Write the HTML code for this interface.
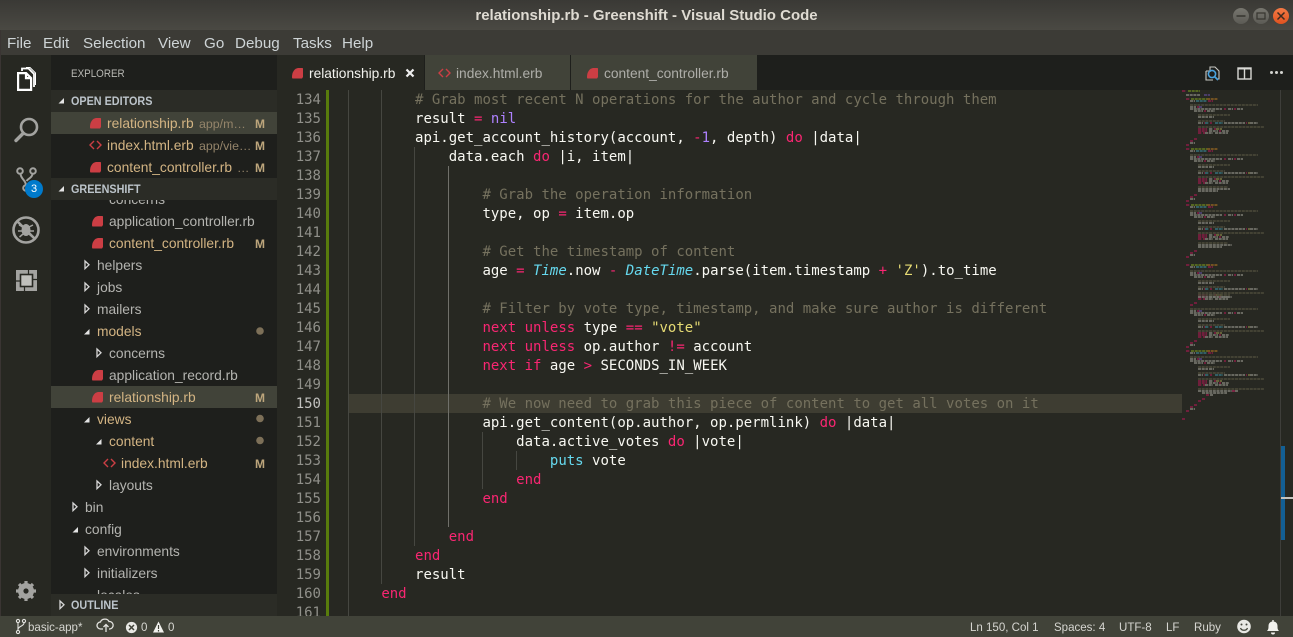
<!DOCTYPE html>
<html><head><meta charset="utf-8"><title>relationship.rb - Greenshift - Visual Studio Code</title>
<style>
html,body{margin:0;padding:0;width:1293px;height:637px;overflow:hidden;background:#272822}
div,span{position:absolute}
#root{left:0;top:0;width:1293px;height:637px;overflow:hidden;font-family:"Liberation Sans",sans-serif;font-size:13.8px}
.b{display:block}
.m{top:34px;font-size:15.2px;line-height:20px;color:#ced4d6;white-space:pre}
.t{white-space:pre;line-height:22px;height:22px;color:#b4b4b0;margin-top:1px}
.g{color:#d3b483}
.d{color:#94846a;font-size:12.4px}
.M{font-weight:bold;font-size:12px;color:#bda67c}
.h{font-weight:bold;font-size:12px;color:#bcc4ca;line-height:22px;white-space:pre;transform:scaleX(.9);transform-origin:0 0}
.tab{top:55px;height:35px;background:#414339}
.tt{top:63px;line-height:22px;white-space:pre;font-size:13.75px}
.s{top:617px;height:21px;line-height:21px;font-size:12.4px;color:#d6d6d1;white-space:pre;transform:scaleX(.93);transform-origin:0 0}
.n{left:277px;width:44px;text-align:right;color:#90908a;height:19px;line-height:19px;margin-top:1px}
.l{left:347.6px;height:19px;line-height:19px;white-space:pre;color:#f8f8f2;margin-top:1px}
#code{left:277px;top:90px;width:1016px;height:526px;overflow:hidden;font-family:"DejaVu Sans Mono","Liberation Mono",monospace;font-size:14px}
#code .n{left:0}
#code .l{left:70.6px}
b{position:static;font-weight:normal}
.k{color:#f92672}.c{color:#75715e}.p{color:#ae81ff}.y{color:#e6db74}.q{color:#66d9ef}.q2{color:#66d9ef;font-style:italic}
.gd{width:1px;background:#464741}
</style></head><body>
<div id="root">
<!-- title -->
<div style="left:0;top:0;width:1293px;height:30px;background:linear-gradient(#3a3935,#4a4943)"></div>
<div style="left:0;top:6px;width:1293px;text-align:center;font-weight:bold;font-size:15px;line-height:20px;color:#dfdbd2">relationship.rb - Greenshift - Visual Studio Code</div>
<svg class="b" style="position:absolute;left:1230px;top:5px" width="63" height="24" viewBox="0 0 63 24">
<defs><linearGradient id="gb" x1="0" y1="0" x2="0" y2="1"><stop offset="0" stop-color="#77766f"/><stop offset="1" stop-color="#5c5b55"/></linearGradient>
<linearGradient id="go" x1="0" y1="0" x2="0" y2="1"><stop offset="0" stop-color="#f47a45"/><stop offset="1" stop-color="#e0521f"/></linearGradient></defs>
<circle cx="11" cy="11" r="8" fill="url(#gb)"/><path d="M6.500 11h9" stroke="#36352f" stroke-width="1.500"/>
<circle cx="31" cy="11" r="8" fill="url(#gb)"/><rect x="27" y="8" width="8" height="6" fill="none" stroke="#36352f" stroke-width="1.200"/>
<circle cx="51" cy="11" r="8" fill="url(#go)"/><path d="M47.500 7.500l7 7M54.500 7.500l-7 7" stroke="#3c2a20" stroke-width="1.500"/>
</svg>
<!-- menu -->
<div style="left:0;top:30px;width:1293px;height:25px;background:#3c3b36"></div>
<span class="m" style="left:7px">File</span><span class="m" style="left:43px">Edit</span><span class="m" style="left:83px">Selection</span><span class="m" style="left:158px">View</span><span class="m" style="left:204px">Go</span><span class="m" style="left:235px">Debug</span><span class="m" style="left:293px">Tasks</span><span class="m" style="left:342px">Help</span>
<!-- activity -->
<div style="left:0;top:55px;width:51px;height:561px;background:#272822"></div>
<div style="left:0;top:30px;width:1px;height:607px;background:#3a3533"></div>
<svg class="b" style="position:absolute;left:0;top:55px" width="51" height="561" viewBox="0 55 51 561" fill="none">
<path d="M18.100 73.100h8l5 5v11.800H18.100zM26 73.100v5h5" stroke="#fff" stroke-width="2.200"/>
<path d="M22 71v-2.500h6.500l5.500 5.500v13" stroke="#fff" stroke-width="1.800"/>
<path d="M26 67.500h4l5.500 5.500v12" stroke="#fff" stroke-width="1"/>
<circle cx="29" cy="127" r="8" stroke="#a3a3a0" stroke-width="2.600"/><path d="M23 133.500l-7 7" stroke="#a3a3a0" stroke-width="3.400" stroke-linecap="round"/>
<circle cx="20" cy="171" r="2.800" stroke="#a3a3a0" stroke-width="2"/><circle cx="33" cy="171" r="2.800" stroke="#a3a3a0" stroke-width="2"/><circle cx="26" cy="188" r="2.800" stroke="#a3a3a0" stroke-width="2"/>
<path d="M20.500 174c.5 5 5 6 5.500 11M32.500 174c-.5 4-4 4-6 7" stroke="#a3a3a0" stroke-width="2"/>
<circle cx="34" cy="189" r="9" fill="#007acc"/>
<circle cx="26" cy="230" r="12.500" stroke="#a3a3a0" stroke-width="2.600"/><path d="M17 221l18 18" stroke="#a3a3a0" stroke-width="2.600"/>
<ellipse cx="26" cy="230" rx="4.500" ry="6" fill="#a3a3a0"/><path d="M19 225l4 2M33 225l-4 2M18 231h4M34 231h-4M19.500 237l3.500-3M32.500 237l-3.500-3" stroke="#a3a3a0" stroke-width="1.500"/>
<rect x="16" y="270" width="21" height="21" fill="#a3a3a0"/><rect x="20.500" y="274.500" width="12" height="12" fill="#c0c0bc" stroke="#272822" stroke-width="1.600"/><path d="M28.500 270v4M32.500 279.500h4.500M16 281h4M24.500 286.500V291" stroke="#272822" stroke-width="1.200"/>
<circle cx="26" cy="591" r="6" stroke="#a3a3a0" stroke-width="4"/><path d="M26 581v20M16 591h20M19 584l14 14M33 584l-14 14" stroke="#a3a3a0" stroke-width="3.200"/><circle cx="26" cy="591" r="2.600" fill="#272822"/>
</svg>
<span style="left:25px;top:180px;width:18px;text-align:center;line-height:18px;font-size:11px;color:#fff">3</span>
<!-- sidebar -->
<div style="left:51px;top:55px;width:226px;height:561px;background:#1e1f1c"></div>
<span style="left:71px;top:63px;line-height:22px;font-size:11.2px;color:#b9b9b4;transform:scaleX(.88);transform-origin:0 0">EXPLORER</span>
<div style="left:51px;top:90px;width:226px;height:22px;background:#2b2c26"></div>
<span class="h" style="left:71px;top:90px">OPEN EDITORS</span>
<div style="left:51px;top:112px;width:226px;height:22px;background:#414339"></div>
<span class="t g" style="left:107px;top:112px">relationship.rb</span><span class="t d" style="left:199px;top:112px">app/m…</span><span class="t M" style="left:255px;top:112px">M</span>
<span class="t g" style="left:107px;top:134px">index.html.erb</span><span class="t d" style="left:199px;top:134px">app/vie…</span><span class="t M" style="left:255px;top:134px">M</span>
<span class="t g" style="left:107px;top:156px">content_controller.rb</span><span class="t d" style="left:237px;top:156px">…</span><span class="t M" style="left:255px;top:156px">M</span>
<!-- tree -->
<div style="left:51px;top:200px;width:226px;height:394px;overflow:hidden">
<div style="left:0;top:186px;width:226px;height:22px;background:#414339"></div>
<span class="t" style="left:58px;top:-12px">concerns</span>
<span class="t" style="left:58px;top:10px">application_controller.rb</span>
<span class="t g" style="left:58px;top:32px">content_controller.rb</span><span class="t M" style="left:204px;top:32px">M</span>
<span class="t" style="left:46px;top:54px">helpers</span>
<span class="t" style="left:46px;top:76px">jobs</span>
<span class="t" style="left:46px;top:98px">mailers</span>
<span class="t g" style="left:46px;top:120px">models</span>
<span class="t" style="left:58px;top:142px">concerns</span>
<span class="t" style="left:58px;top:164px">application_record.rb</span>
<span class="t g" style="left:58px;top:186px">relationship.rb</span><span class="t M" style="left:204px;top:186px">M</span>
<span class="t g" style="left:46px;top:208px">views</span>
<span class="t g" style="left:58px;top:230px">content</span>
<span class="t g" style="left:70px;top:252px">index.html.erb</span><span class="t M" style="left:204px;top:252px">M</span>
<span class="t" style="left:58px;top:274px">layouts</span>
<span class="t" style="left:34px;top:296px">bin</span>
<span class="t" style="left:34px;top:318px">config</span>
<span class="t" style="left:46px;top:340px">environments</span>
<span class="t" style="left:46px;top:362px">initializers</span>
<span class="t" style="left:46px;top:384px">locales</span>
</div>
<div style="left:51px;top:178px;width:226px;height:22px;background:#2b2c26"></div>
<span class="h" style="left:71px;top:178px">GREENSHIFT</span>
<div style="left:51px;top:594px;width:226px;height:22px;background:#2b2c26"></div>
<span class="h" style="left:71px;top:594px">OUTLINE</span>
<svg class="b" style="position:absolute;left:51px;top:90px" width="226" height="526" viewBox="51 90 226 526">
<defs>
<path id="rb" d="M6 0H10.500Q11 0 11 1V9L10 10.500H.500Q0 10.500 0 9C0 4 2.500 .5 6 0Z" fill="#cc3e44"/>
<path id="ht" d="M4 0L0 4L4 8M7 0L11 4L7 8" fill="none" stroke="#cc3e44" stroke-width="1.400"/>
<path id="ar" d="M0 0L4 3.800L0 7.600Z" fill="none" stroke="#d6d6d6" stroke-width="1.300"/>
<path id="dn" d="M5.500 0V5.500H0Z" fill="#e4e4e4"/>
</defs>
<use href="#dn" x="58.500" y="98"/><use href="#dn" x="58.500" y="186"/>
<use href="#ar" x="60" y="601"/>
<use href="#rb" x="90" y="118"/><use href="#ht" x="90" y="141"/><use href="#rb" x="90" y="162"/>
<use href="#rb" x="92" y="216"/><use href="#rb" x="92" y="238"/>
<use href="#ar" x="85" y="261"/><use href="#ar" x="85" y="283"/><use href="#ar" x="85" y="305"/>
<use href="#dn" x="84" y="329"/><use href="#ar" x="97" y="349"/>
<use href="#rb" x="92" y="370"/><use href="#rb" x="92" y="392"/>
<use href="#dn" x="84" y="417"/><use href="#dn" x="96" y="439"/>
<use href="#ht" x="104" y="459"/><use href="#ar" x="97" y="481"/>
<use href="#ar" x="73" y="503"/><use href="#dn" x="72.500" y="527"/>
<use href="#ar" x="85" y="547"/><use href="#ar" x="85" y="569"/>
<circle cx="260" cy="331" r="3.800" fill="#7d7058"/><circle cx="260" cy="418.500" r="3.800" fill="#7d7058"/><circle cx="260" cy="440.500" r="3.800" fill="#7d7058"/>
</svg>
<!-- tabs -->
<div style="left:277px;top:55px;width:1016px;height:35px;background:#1e1f1c"></div>
<div class="tab" style="left:277px;width:147px;background:#272822"></div>
<div class="tab" style="left:425px;width:145px"></div>
<div class="tab" style="left:571px;width:186px"></div>
<span class="tt" style="left:309px;color:#f2f2ee">relationship.rb</span>
<span class="tt" style="left:456px;color:#aeaea9">index.html.erb</span>
<span class="tt" style="left:604px;color:#aeaea9">content_controller.rb</span>
<svg class="b" style="position:absolute;left:277px;top:55px" width="1016" height="35" viewBox="277 55 1016 35" fill="none">
<use href="#rb" x="292" y="68"/><use href="#ht" x="439" y="69"/><use href="#rb" x="587" y="68"/>
<path d="M406.500 69.500l7 7M413.500 69.500l-7 7" stroke="#eee" stroke-width="2.200"/>
<path d="M1210 72v-5h5l4 4v8h-2M1206 71h4.500M1206 71v9h7" stroke="#c8c8c4" stroke-width="1.100"/>
<circle cx="1212" cy="74" r="3.600" stroke="#4aa3df" stroke-width="1.600"/><path d="M1214.500 76.500l3.500 3.500" stroke="#4aa3df" stroke-width="1.800"/>
<rect x="1238" y="68" width="13" height="11" stroke="#d8d8d4" stroke-width="1.400"/><path d="M1238 68.500h13" stroke="#d8d8d4" stroke-width="2"/><path d="M1244.500 68v11" stroke="#d8d8d4" stroke-width="1.400"/>
<circle cx="1271.500" cy="72.500" r="1.500" fill="#d4d4d0"/><circle cx="1276.500" cy="72.500" r="1.500" fill="#d4d4d0"/><circle cx="1281.500" cy="72.500" r="1.500" fill="#d4d4d0"/>
</svg>
<!-- editor -->
<div id="code">
<div style="left:71px;top:304px;width:834px;height:19px;background:#3e3d32"></div>
<div class="gd" style="left:71px;top:0;height:526px"></div>
<div class="gd" style="left:104px;top:0;height:494px"></div>
<div class="gd" style="left:137px;top:57px;height:399px"></div>
<div class="gd" style="left:171px;top:76px;height:361px;background:#70706a"></div>
<div class="gd" style="left:205px;top:342px;height:57px"></div>
<div class="gd" style="left:239px;top:361px;height:19px"></div>
<div style="left:49px;top:0;width:3px;height:526px;background:#587c0c"></div>
<div class="n" style="top:0">134</div><div class="l" style="top:0">        <b class="c"># Grab most recent N operations for the author and cycle through them</b></div>
<div class="n" style="top:19px">135</div><div class="l" style="top:19px">        result <b class="k">=</b> <b class="p">nil</b></div>
<div class="n" style="top:38px">136</div><div class="l" style="top:38px">        api.get_account_history(account, <b class="k">-</b><b class="p">1</b>, depth) <b class="k">do</b> |data|</div>
<div class="n" style="top:57px">137</div><div class="l" style="top:57px">            data.each <b class="k">do</b> |i, item|</div>
<div class="n" style="top:76px">138</div>
<div class="n" style="top:95px">139</div><div class="l" style="top:95px">                <b class="c"># Grab the operation information</b></div>
<div class="n" style="top:114px">140</div><div class="l" style="top:114px">                type, op <b class="k">=</b> item.op</div>
<div class="n" style="top:133px">141</div>
<div class="n" style="top:152px">142</div><div class="l" style="top:152px">                <b class="c"># Get the timestamp of content</b></div>
<div class="n" style="top:171px">143</div><div class="l" style="top:171px">                age <b class="k">=</b> <b class="q2">Time</b>.now <b class="k">-</b> <b class="q2">DateTime</b>.parse(item.timestamp <b class="k">+</b> <b class="y">'Z'</b>).to_time</div>
<div class="n" style="top:190px">144</div>
<div class="n" style="top:209px">145</div><div class="l" style="top:209px">                <b class="c"># Filter by vote type, timestamp, and make sure author is different</b></div>
<div class="n" style="top:228px">146</div><div class="l" style="top:228px">                <b class="k">next</b> <b class="k">unless</b> type <b class="k">==</b> <b class="y">"vote"</b></div>
<div class="n" style="top:247px">147</div><div class="l" style="top:247px">                <b class="k">next</b> <b class="k">unless</b> op.author <b class="k">!=</b> account</div>
<div class="n" style="top:266px">148</div><div class="l" style="top:266px">                <b class="k">next</b> <b class="k">if</b> age <b class="k">&gt;</b> SECONDS_IN_WEEK</div>
<div class="n" style="top:285px">149</div>
<div class="n" style="top:304px;color:#c2c2bf">150</div><div class="l" style="top:304px">                <b class="c"># We now need to grab this piece of content to get all votes on it</b></div>
<div class="n" style="top:323px">151</div><div class="l" style="top:323px">                api.get_content(op.author, op.permlink) <b class="k">do</b> |data|</div>
<div class="n" style="top:342px">152</div><div class="l" style="top:342px">                    data.active_votes <b class="k">do</b> |vote|</div>
<div class="n" style="top:361px">153</div><div class="l" style="top:361px">                        <b class="q">puts</b> vote</div>
<div class="n" style="top:380px">154</div><div class="l" style="top:380px">                    <b class="k">end</b></div>
<div class="n" style="top:399px">155</div><div class="l" style="top:399px">                <b class="k">end</b></div>
<div class="n" style="top:418px">156</div>
<div class="n" style="top:437px">157</div><div class="l" style="top:437px">            <b class="k">end</b></div>
<div class="n" style="top:456px">158</div><div class="l" style="top:456px">        <b class="k">end</b></div>
<div class="n" style="top:475px">159</div><div class="l" style="top:475px">        result</div>
<div class="n" style="top:494px">160</div><div class="l" style="top:494px">    <b class="k">end</b></div>
<div class="n" style="top:513px">161</div>
</div>
<!-- minimap -->
<svg class="b" style="position:absolute;left:1182px;top:90px" width="111" height="526" viewBox="1182 90 111 526" fill="none" stroke-width="1.300" stroke-dasharray="3 .7">
<defs>
<g id="df">
<path stroke="#9c1a4c" d="M1186 0h4M1208 2h5"/>
<path stroke="#6f8a20" d="M1191 0h16"/><path stroke="#a06c22" d="M1207 0h11"/>
<path stroke="#8e8e86" d="M1190 2h5"/>
<path stroke="#38808f" d="M1196 2h11"/>
</g>
<g id="bd">
<path stroke="#9c1a4c" d="M1197 8h2M1224 10h2M1234 10h2M1204 12h2M1204 24h1M1210 24h2M1246 24h1M1214 30h2M1198 30h9M1198 32h9M1219 32h2M1198 34h4M1203 34h2"/>
<path stroke="#8e8e86" d="M1190 8h6M1190 10h32M1228 10h5M1237 10h6M1194 12h9M1207 12h8M1198 18h10M1209 18h5M1198 24h5M1224 24h21M1250 24h8M1209 30h4M1209 32h9M1222 32h7M1205 34h8M1215 34h13"/>
<path stroke="#38808f" d="M1205 24h4M1215 24h8"/>
<path stroke="#5f4a94" d="M1199 8h3"/>
<path stroke="#8a8548" d="M1248 24h2M1216 30h6"/>
<path stroke="#54523f" d="M1190 6h68M1198 16h32M1198 22h27M1198 28h66"/>
</g>
</defs>
<path stroke="#9c1a4c" d="M1182 91h4M1194 139h3M1190 141h3M1186 145h3M1194 195h3M1190 197h3M1186 201h3M1194 251h3M1190 253h3M1186 257h3M1194 303h3M1190 305h3M1194 341h3M1190 343h3M1186 347h3M1206 395h3M1202 399h3M1198 401h3M1194 405h3M1190 407h3M1186 411h3M1182 419h3"/>
<path stroke="#6f8a20" d="M1188 91h12"/>
<path stroke="#8e8e86" d="M1186 95h14M1190 143h5M1190 199h5M1190 255h5M1190 345h5M1190 409h5"/>
<path stroke="#5f4a94" d="M1204 95h6"/>
<use href="#df" y="99"/><use href="#bd" y="99"/>
<use href="#df" y="149"/><use href="#bd" y="149"/>
<use href="#df" y="205"/><use href="#bd" y="205"/>
<use href="#df" y="265"/><use href="#bd" y="265"/>
<use href="#bd" y="303"/>
<use href="#df" y="351"/><use href="#bd" y="351"/>
<path stroke="#54523f" d="M1198 187h30M1198 243h30M1198 295h32M1198 389h66"/>
<path stroke="#8e8e86" d="M1198 189h32M1198 191h20M1198 245h34M1198 247h24M1198 297h34M1198 391h40M1202 393h25M1210 395h3"/>
<path stroke="#9c1a4c" d="M1232 391h3"/>
<rect x="1280" y="90" width="1" height="526" fill="#3e3e3a" stroke="none"/>
<rect x="1281" y="446" width="4" height="94" fill="#135f94" stroke="none"/>
<rect x="1281" y="497" width="12" height="2" fill="#c4c4c0" stroke="none"/>
</svg>
<!-- status -->
<div style="left:0;top:616px;width:1293px;height:21px;background:#414339"></div>
<span class="s" style="left:28px">basic-app*</span>
<span class="s" style="left:141px">0</span><span class="s" style="left:168px">0</span>
<span class="s" style="left:970px">Ln 150, Col 1</span><span class="s" style="left:1054px">Spaces: 4</span><span class="s" style="left:1119px">UTF-8</span><span class="s" style="left:1166px">LF</span><span class="s" style="left:1194px">Ruby</span>
<svg class="b" style="position:absolute;left:0;top:616px" width="1293" height="21" viewBox="0 616 1293 21" fill="none">
<circle cx="18" cy="621" r="1.600" stroke="#e4e4e0" stroke-width="1.100"/><circle cx="24" cy="621" r="1.600" stroke="#e4e4e0" stroke-width="1.100"/><circle cx="18" cy="632" r="1.600" stroke="#e4e4e0" stroke-width="1.100"/><path d="M18 623v7M24 623c0 3-5 3-6 6" stroke="#e4e4e0" stroke-width="1.100"/>
<path d="M103 629h-2.500a3.500 3.500 0 0 1 0-7c1-3.500 7-4 8.500-.5a3.700 3.700 0 0 1 .8 7.500H109" stroke="#e4e4e0" stroke-width="1.300"/><path d="M106 632v-7M103.500 627l2.500-2.500 2.500 2.500" stroke="#e4e4e0" stroke-width="1.300"/>
<circle cx="131.500" cy="627.500" r="5.600" fill="#e8e8e4"/><path d="M129 625l5 5M134 625l-5 5" stroke="#414339" stroke-width="1.500"/>
<path d="M158.500 621.500l5.500 11h-11z" fill="#f2f2ee"/><path d="M158.500 625v4M158.500 630v1.500" stroke="#414339" stroke-width="1.200"/>
<circle cx="1244" cy="626.500" r="6.800" fill="#e8e8e4"/><circle cx="1241.500" cy="624.500" r="1" fill="#414339"/><circle cx="1246.500" cy="624.500" r="1" fill="#414339"/><path d="M1240.500 628c1 3 6 3 7 0" stroke="#414339" stroke-width="1.200"/>
<path d="M1267 631c1.500-1.500 1.500-3 1.500-5 0-3 2-4.500 4.500-4.500s4.500 1.500 4.500 4.500c0 2 0 3.500 1.500 5z" fill="#f2f2ee"/><path d="M1273 620v2" stroke="#f2f2ee" stroke-width="1.400"/><path d="M1271 632.500a2 2 0 0 0 4 0z" fill="#f2f2ee"/>
</svg>
</div>
</body></html>
